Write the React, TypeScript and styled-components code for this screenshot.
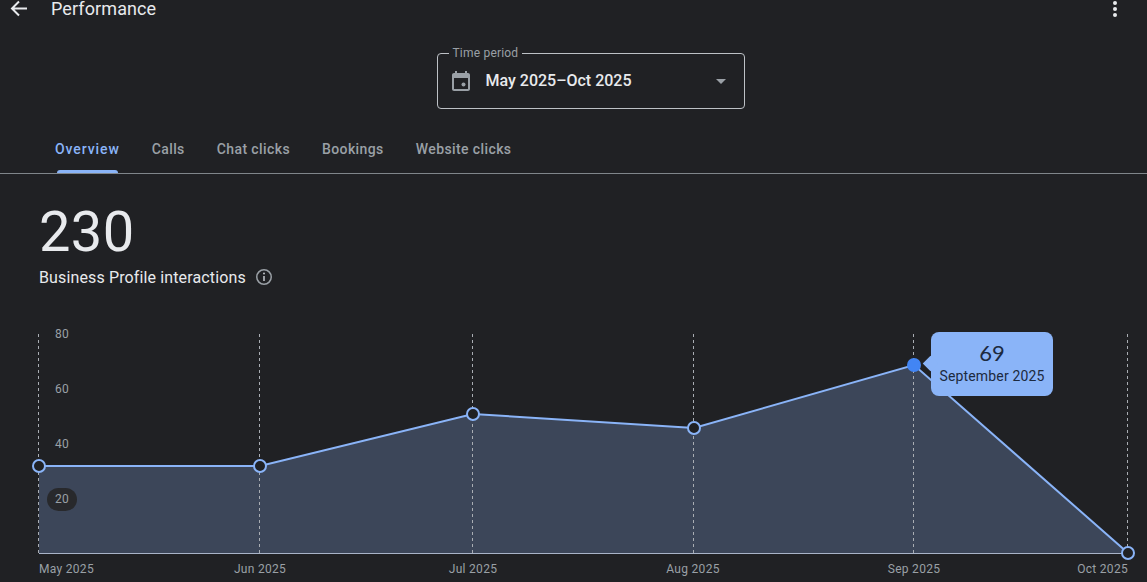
import React from "react";
import styled, { createGlobalStyle } from "styled-components";

const Global = createGlobalStyle`
  html, body { margin: 0; padding: 0; background: #202124; }
  body { font-family: Roboto, "Liberation Sans", sans-serif; overflow: hidden; }
`;

const Page = styled.div`
  width: 1147px;
  height: 582px;
  background: #202124;
  color: #e8eaed;
  display: flex;
  flex-direction: column;
  overflow: hidden;
`;

const Header = styled.header`
  height: 17px;
  display: flex;
  align-items: flex-start;
  padding: 0 20px 0 7px;
  flex: none;
`;

const IconButton = styled.span`
  display: flex;
  width: 24px;
  height: 17px;
  flex: none;
  color: #e8eaed;
`;

const Title = styled.h1`
  margin: 0 0 0 20px;
  font-size: 18px;
  line-height: 17px;
  font-weight: 400;
  letter-spacing: 0.1px;
  flex: 1;
  color: #e8eaed;
`;

const PeriodRow = styled.div`
  display: flex;
  justify-content: center;
  padding: 36px 0 0 34px;
  flex: none;
`;

const Period = styled.div`
  position: relative;
  box-sizing: border-box;
  width: 308px;
  height: 56px;
  border: 1px solid #bdc1c6;
  border-radius: 4px;
  display: flex;
  align-items: center;
  padding: 0 18px 0 11px;
`;

const PeriodLabel = styled.span`
  position: absolute;
  top: -8px;
  left: 11px;
  padding: 0 4px;
  background: #202124;
  font-size: 12px;
  line-height: 14px;
  letter-spacing: 0.2px;
  color: #9aa0a6;
`;

const PeriodValue = styled.span`
  flex: 1;
  margin: 0 0 2px 13px;
  font-size: 16px;
  font-weight: 500;
  color: #e8eaed;
`;

const Caret = styled.span`
  width: 0;
  height: 0;
  border-left: 5px solid transparent;
  border-right: 5px solid transparent;
  border-top: 5px solid #9aa0a6;
`;

const Tabs = styled.nav`
  display: flex;
  height: 64px;
  padding-left: 39px;
  border-bottom: 1px solid #80868b;
  flex: none;
`;

const Tab = styled.span<{ $active?: boolean }>`
  position: relative;
  box-sizing: border-box;
  height: 64px;
  padding: 24px 16px 0;
  font-size: 14px;
  line-height: 32px;
  font-weight: 500;
  letter-spacing: ${(p) => (p.$active ? "0.9px" : "0.4px")};
  color: ${(p) => (p.$active ? "#8ab4f8" : "#9aa0a6")};
  ${(p) =>
    p.$active &&
    `&::after {
      content: "";
      position: absolute;
      left: 18px;
      right: 18px;
      bottom: 0;
      height: 3px;
      background: #8ab4f8;
      border-radius: 3px 3px 0 0;
    }`}
`;

const Summary = styled.section`
  padding: 26px 0 0 39px;
  flex: none;
`;

const Total = styled.div`
  font-size: 56px;
  line-height: 64px;
  font-weight: 400;
  letter-spacing: 0.4px;
  color: #e8eaed;
`;

const MetricRow = styled.div`
  display: flex;
  align-items: center;
  gap: 9px;
  margin-top: 1px;
  height: 24px;
`;

const MetricLabel = styled.span`
  font-size: 16px;
  font-weight: 400;
  letter-spacing: 0.13px;
  color: #e8eaed;
`;

const ChartWrap = styled.div`
  position: relative;
  flex: 1;
  margin-top: 45px;
`;

const ChartSvg = styled.svg`
  display: block;
  width: 1147px;
  height: 248px;
  overflow: visible;
`;

const Tooltip = styled.div`
  position: absolute;
  left: 931px;
  top: -2px;
  box-sizing: border-box;
  width: 122px;
  height: 64px;
  padding-bottom: 2px;
  border-radius: 8px;
  background: #8ab4f8;
  color: #1c2a40;
  display: flex;
  flex-direction: column;
  align-items: center;
  justify-content: center;
  &::before {
    content: "";
    position: absolute;
    left: -6px;
    top: 26px;
    width: 11px;
    height: 11px;
    background: #8ab4f8;
    transform: rotate(45deg);
  }
`;

const TipValue = styled.span`
  position: relative;
  font-family: Lato, Roboto, sans-serif;
  font-size: 22px;
  line-height: 26px;
`;

const TipDate = styled.span`
  position: relative;
  font-size: 14px;
  line-height: 20px;
  letter-spacing: 0.15px;
`;

const pts: [number, number][] = [
  [39, 132],
  [260, 132],
  [473, 80],
  [694, 94],
  [914, 31],
  [1128, 219],
];
const xLabels: [string, number, "start" | "middle" | "end"][] = [
  ["May 2025", 39, "start"],
  ["Jun 2025", 260, "middle"],
  ["Jul 2025", 473, "middle"],
  ["Aug 2025", 693, "middle"],
  ["Sep 2025", 914, "middle"],
  ["Oct 2025", 1128, "end"],
];
const yLabels: [string, number][] = [
  ["80", 0],
  ["60", 55],
  ["40", 110],
  ["20", 165],
];

const line = pts.map((p) => p.join(",")).join(" ");
const area = `39,219 ${line} 1128,219`;

export default function App() {
  return (
    <Page>
      <Global />
      <Header>
        <IconButton>
          <svg width="24" height="17" viewBox="0 0 24 17" fill="none" stroke="currentColor" strokeWidth="2">
            <path d="M20 8.5H5.5M12 1.5 5 8.5l7 7" />
          </svg>
        </IconButton>
        <Title>Performance</Title>
        <IconButton>
          <svg width="24" height="17" viewBox="0 0 24 17" fill="currentColor">
            <circle cx="12" cy="3" r="2" />
            <circle cx="12" cy="9" r="2" />
            <circle cx="12" cy="15" r="2" />
          </svg>
        </IconButton>
      </Header>
      <PeriodRow>
        <Period>
          <PeriodLabel>Time period</PeriodLabel>
          <svg width="24" height="24" viewBox="0 0 24 24" fill="#9aa0a6">
            <path d="M19 4h-1V2h-2v2H8V2H6v2H5c-1.1 0-2 .9-2 2v14c0 1.1.9 2 2 2h14c1.1 0 2-.9 2-2V6c0-1.1-.9-2-2-2zm0 16H5V9h14v11z" />
            <circle cx="14.5" cy="15.5" r="2" />
          </svg>
          <PeriodValue>May 2025–Oct 2025</PeriodValue>
          <Caret />
        </Period>
      </PeriodRow>
      <Tabs>
        <Tab $active>Overview</Tab>
        <Tab>Calls</Tab>
        <Tab>Chat clicks</Tab>
        <Tab>Bookings</Tab>
        <Tab>Website clicks</Tab>
      </Tabs>
      <Summary>
        <Total>230</Total>
        <MetricRow>
          <MetricLabel>Business Profile interactions</MetricLabel>
          <svg width="18" height="18" viewBox="0 0 18 18" fill="none">
            <circle cx="9" cy="9" r="7.25" stroke="#9aa0a6" strokeWidth="1.5" />
            <path d="M9 8v5" stroke="#bdc1c6" strokeWidth="1.6" />
            <circle cx="9" cy="5.6" r="1" fill="#bdc1c6" />
          </svg>
        </MetricRow>
      </Summary>
      <ChartWrap>
        <ChartSvg viewBox="0 0 1147 248">
          <polygon points={area} fill="#3c4659" />
          {pts.map(([x], i) => (
            <line
              key={i}
              x1={x - 0.5}
              x2={x - 0.5}
              y1={0}
              y2={219}
              stroke="#a9adb3"
              strokeWidth="1"
              strokeDasharray="3 3"
            />
          ))}
          <line x1="39" x2="1128" y1="219.5" y2="219.5" stroke="#a9b4c8" strokeWidth="1" />
          <rect x="47" y="154" width="30" height="23" rx="11.5" fill="#28292c" />
          {yLabels.map(([t, y]) => (
            <text key={t} x="62" y={y} fill="#9aa0a6" fontSize="12" textAnchor="middle" dominantBaseline="central" fontFamily="Roboto, sans-serif" letterSpacing="0.3">
              {t}
            </text>
          ))}
          <polyline points={line} fill="none" stroke="#8ab4f8" strokeWidth="2" />
          {pts.map(([x, y], i) =>
            i === 4 ? (
              <circle key={i} cx={x} cy={y} r="7" fill="#4285f4" />
            ) : (
              <circle key={i} cx={x} cy={y} r="6" fill="#202124" stroke="#8ab4f8" strokeWidth="2" />
            )
          )}
          {xLabels.map(([t, x, a]) => (
            <text key={t} x={x} y={239} fill="#9aa0a6" fontSize="12" textAnchor={a} fontFamily="Roboto, sans-serif" letterSpacing="0.3">
              {t}
            </text>
          ))}
        </ChartSvg>
        <Tooltip>
          <TipValue>69</TipValue>
          <TipDate>September 2025</TipDate>
        </Tooltip>
      </ChartWrap>
    </Page>
  );
}
